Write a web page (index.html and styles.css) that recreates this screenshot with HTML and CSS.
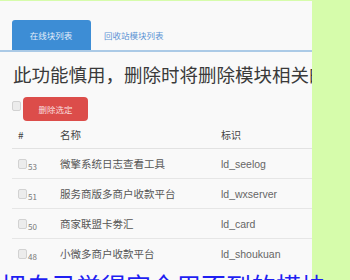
FILE: index.html
```html
<!DOCTYPE html>
<html lang="zh-CN">
<head>
    <meta charset="UTF-8">
    <title>模块管理</title>
    <link rel="stylesheet" href="styles.css">
</head>
<body>
<div class="wrap">
    <!-- 选项卡 -->
    <ul class="tabs">
        <li class="tab active">在线块列表</li>
        <li class="tab">回收站模块列表</li>
    </ul>

    <h2 class="warn">此功能慎用，删除时将删除模块相关的数据</h2>

    <div class="toolbar">
        <span class="chk"></span>
        <button class="btn-del">删除选定</button>
    </div>

    <!-- 模块列表 -->
    <table class="list">
        <thead>
            <tr>
                <th class="c-id">#</th>
                <th class="c-name">名称</th>
                <th>标识</th>
            </tr>
        </thead>
        <tbody>
            <tr>
                <td class="c-id"><span class="chk"></span><span class="num">53</span></td>
                <td class="c-name">微擎系统日志查看工具</td>
                <td class="mark">ld_seelog</td>
            </tr>
            <tr>
                <td class="c-id"><span class="chk"></span><span class="num">51</span></td>
                <td class="c-name">服务商版多商户收款平台</td>
                <td class="mark">ld_wxserver</td>
            </tr>
            <tr>
                <td class="c-id"><span class="chk"></span><span class="num">50</span></td>
                <td class="c-name">商家联盟卡劵汇</td>
                <td class="mark">ld_card</td>
            </tr>
            <tr>
                <td class="c-id"><span class="chk"></span><span class="num">48</span></td>
                <td class="c-name">小微多商户收款平台</td>
                <td class="mark">ld_shoukuan</td>
            </tr>
        </tbody>
    </table>

    <p class="note">把自己觉得完全用不到的模块</p>
</div>
</body>
</html>
```

FILE: styles.css
```css
/* 全体 */
body {
    margin: 0;
    background: #d6fcab;
    font-family: "Noto Sans CJK SC", "Liberation Sans", sans-serif;
    overflow: hidden;
}

.wrap {
    width: 312px;
    height: 279px;
    margin-top: 1px;
    background: #f9f9f9;
}

/* 选项卡 */
.tabs {
    list-style: none;
    margin: 0;
    padding: 19px 0 0 12px;
    display: flex;
    border-bottom: 2px solid #abcae6;
}

.tab {
    height: 30px;
    line-height: 30px;
    padding: 0 14px 0 13px;
    font-size: 8.5px;
    color: #5b93d4;
}

.tab.active {
    background: #3d8dd5;
    color: #e3eefa;
    border-radius: 3px 3px 0 0;
    width: 52px;
    text-align: center;
}

/* 警告 */
.warn {
    margin: 11px 0 0 13px;
    font-size: 18.5px;
    line-height: 22px;
    font-weight: normal;
    color: #3a3a3a;
    white-space: nowrap;
    overflow: hidden;
}

/* 工具栏 */
.toolbar {
    display: flex;
    align-items: center;
    gap: 2px;
    margin: 12px 0 0 12px;
}

.chk {
    display: inline-block;
    width: 7px;
    height: 8px;
    border: 1px solid #d2d2d2;
    border-radius: 2px;
    background: #ececec;
}

.toolbar .chk {
    align-self: flex-start;
    margin-top: 4px;
}

.btn-del {
    width: 65px;
    height: 24px;
    border: none;
    border-radius: 4px;
    background: #dc4d4a;
    color: #f8dede;
    font-family: inherit;
    font-size: 8.5px;
    padding: 0;
}

/* 列表 */
.list {
    margin-left: 12px;
    width: 300px;
    border-collapse: collapse;
    font-size: 10px;
    color: #555;
}

.list th {
    height: 27px;
    text-align: left;
    font-weight: normal;
    color: #444;
    border-bottom: 1px solid #e2e2e2;
    padding: 0;
}

.list td {
    height: 29px;
    padding: 0;
    border-bottom: 1px solid #e6e6e6;
    white-space: nowrap;
}

.list tbody tr:last-child td {
    border-bottom: none;
}

.c-id {
    width: 48px;
    padding-left: 6px !important;
    box-sizing: border-box;
}

.c-id .chk {
    vertical-align: middle;
}

.num {
    font-size: 8px;
    color: #777;
    margin-left: 1px;
    vertical-align: -3px;
}

.c-name {
    width: 161px;
    font-size: 10.5px;
}

.mark {
    font-family: "Liberation Sans", sans-serif;
    font-size: 10.5px;
    color: #666;
}

/* 下方文字 */
.note {
    margin: 5px 0 0 1px;
    font-size: 25px;
    line-height: 24px;
    color: #1f1ff2;
    white-space: nowrap;
}
```
